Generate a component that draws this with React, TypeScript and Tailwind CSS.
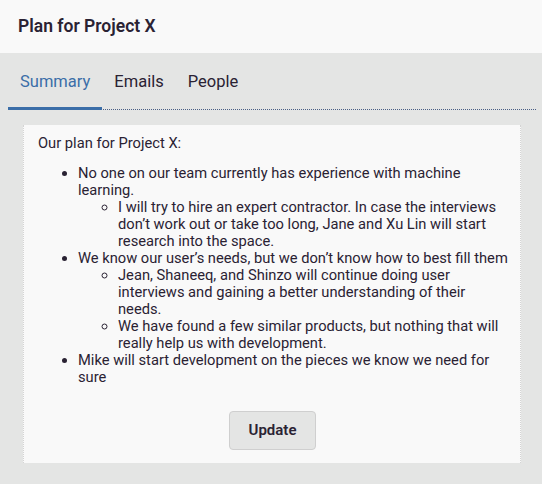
import React from 'react';

const tabs = ['Summary', 'Emails', 'People'];

const App = () => {
  return (
    <div className="w-[542px] h-[484px] bg-[#e4e5e4] text-[#2a2233]" style={{ fontFamily: 'Roboto, "Noto Sans", sans-serif' }}>
      <div className="h-[53px] bg-[#f9f9f9] px-[18px] flex items-center">
        <h1 className="text-[17.5px] font-semibold">Plan for Project X</h1>
      </div>

      <div className="ml-2 mr-[6px] flex border-b border-dotted border-[#4a5f86]">
        {tabs.map((t, i) => (
          <div
            key={t}
            className={
              i === 0
                ? 'px-3 pt-[18px] pb-[14px] leading-[22px] text-[16.5px] text-[#3b6ea8] border-b-[3px] border-[#3b6ea8] -mb-px'
                : 'px-3 pt-[18px] pb-[14px] leading-[22px] text-[16.5px] border-b-[3px] border-transparent -mb-px'
            }
          >
            {t}
          </div>
        ))}
      </div>

      <div className="mt-[15px] ml-[23px] mr-[21px] bg-[#f9f9f9] border-x border-dotted border-[#d4d4d4] pl-[14px] pr-[10px] pt-[10px] pb-[13px] text-[14.7px] leading-[17px]">
        <p className="mb-[13px]">Our plan for Project X:</p>
        <ul className="list-disc pl-10">
          <li>
            No one on our team currently has experience with machine learning.
            <ul className="list-[circle] pl-10">
              <li>I will try to hire an expert contractor. In case the interviews don’t work out or take too long, Jane and Xu Lin will start research into the space.</li>
            </ul>
          </li>
          <li>
            We know our user’s needs, but we don’t know how to best fill them
            <ul className="list-[circle] pl-10">
              <li>Jean, Shaneeq, and Shinzo will continue doing user interviews and gaining a better understanding of their needs.</li>
              <li>We have found a few similar products, but nothing that will really help us with development.</li>
            </ul>
          </li>
          <li>Mike will start development on the pieces we know we need for sure</li>
        </ul>
        <div className="flex justify-center mt-[25px] pr-[3px]">
          <button className="w-[87px] h-[39px] bg-[#e4e5e4] border border-[#cfcfcf] rounded-sm text-[15px] font-semibold">
            Update
          </button>
        </div>
      </div>
    </div>
  );
};

export default App;
